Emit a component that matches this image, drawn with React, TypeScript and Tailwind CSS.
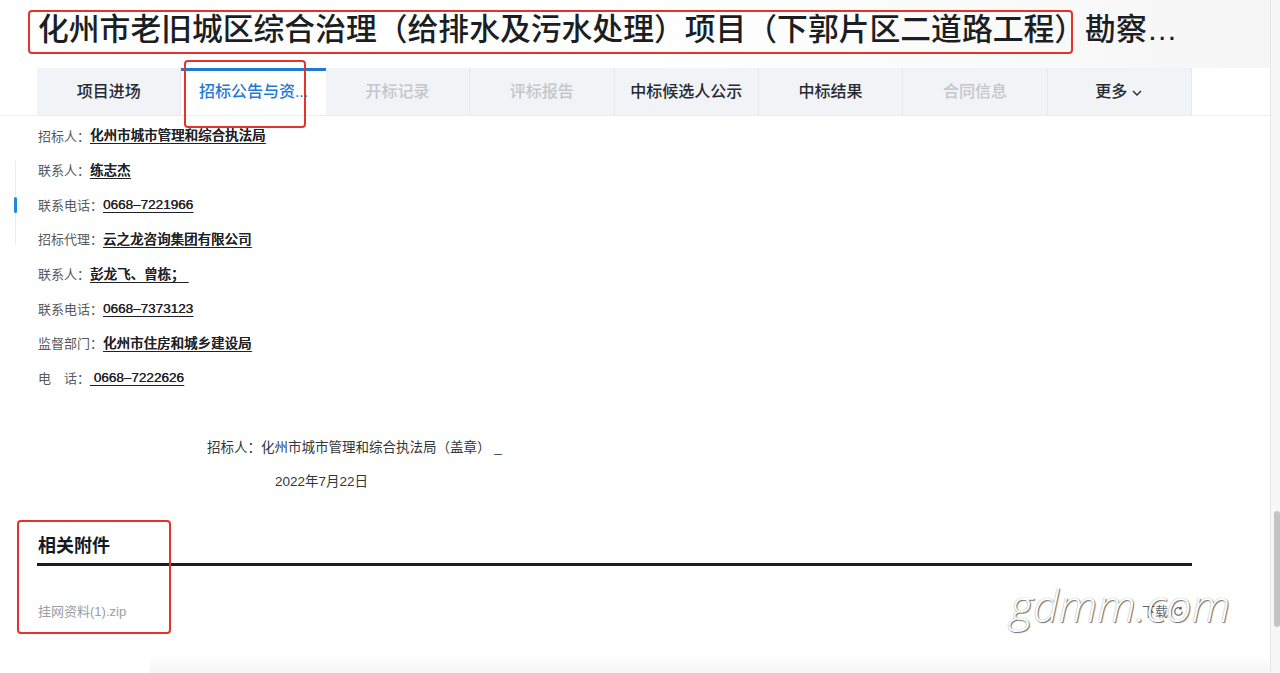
const tabs = [
  { label: "项目进场", state: "normal" },
  { label: "招标公告与资...", state: "active" },
  { label: "开标记录", state: "disabled" },
  { label: "评标报告", state: "disabled" },
  { label: "中标候选人公示", state: "normal" },
  { label: "中标结果", state: "normal" },
  { label: "合同信息", state: "disabled" },
  { label: "更多", state: "more" },
];

const rows = [
  { label: "招标人：", value: "化州市城市管理和综合执法局" },
  { label: "联系人：", value: "练志杰" },
  { label: "联系电话：", value: "0668–7221966" },
  { label: "招标代理：", value: "云之龙咨询集团有限公司" },
  { label: "联系人：", value: "彭龙飞、曾栋； " },
  { label: "联系电话：", value: "0668–7373123" },
  { label: "监督部门：", value: "化州市住房和城乡建设局" },
  { label: "电\u3000话：", value: "\u00a00668–7222626" },
];

export default function App() {
  return (
    <div className="relative flex h-[673px] w-[1280px] overflow-hidden bg-white font-['Liberation_Sans','Noto_Sans_CJK_SC',sans-serif]">
      {/* Page */}
      <div className="relative flex-1">
        <div className="h-[68px] bg-gradient-to-r from-white via-white to-[#f6f6f6] pl-[38px] pt-[11px]">
          <h1 className="max-w-[1145px] truncate text-[30.8px] font-medium leading-[38px] text-[#1b1f24]">
            化州市老旧城区综合治理（给排水及污水处理）项目（下郭片区二道路工程）勘察设计施工总承包
          </h1>
        </div>

        {/* Tabs */}
        <div className="border-b border-[#ebedf0] pl-[37px]">
          <div className="grid w-[1155px] grid-cols-8 bg-[#f1f3f6]">
            {tabs.map((t) => (
              <div
                key={t.label}
                className={
                  t.state === "active"
                    ? "flex h-[47px] items-center justify-center border-t-[3px] border-[#1f7ad6] bg-white pb-[3px] text-[16px] font-medium text-[#1f7ad6]"
                    : "flex h-[47px] items-center justify-center border-r border-[#e6e8ec] text-[16px] font-medium " +
                      (t.state === "disabled" ? "text-[#c3c6cb]" : "text-[#262a30]")
                }
              >
                {t.label}
                {t.state === "more" && (
                  <svg width="12" height="12" viewBox="0 0 12 12" className="ml-[4px] mt-[2px]">
                    <path d="M2 4l4 4 4-4" fill="none" stroke="#262a30" strokeWidth="1.4" />
                  </svg>
                )}
              </div>
            ))}
          </div>
        </div>

        {/* Details */}
        <div className="flex pt-[3px]">
          <div className="w-[38px] pl-[14px] pt-[42px]">
            <div className="flex w-[3px] flex-col items-center">
              <div className="h-[36px] w-px bg-[#ececec]" />
              <div className="h-[16px] w-[3px] rounded-full bg-[#1e88e5]" />
              <div className="h-[32px] w-px bg-[#ececec]" />
            </div>
          </div>
          <div className="flex-1 text-[13px]">
            {rows.map((r, i) => (
              <div key={i} className="flex h-[34.6px] items-center">
                <span className="text-[#555a60]">{r.label}</span>
                <span className="whitespace-pre text-[13.5px] font-medium text-[#1f2226] underline underline-offset-[3px] [text-shadow:0.3px_0_0_#1f2226]">
                  {r.value}
                </span>
              </div>
            ))}
            <div className="h-[34.6px]" />
            <div className="flex h-[34.6px] items-center pl-[169px] text-[13.5px] text-[#33363a]">
              招标人：化州市城市管理和综合执法局（盖章） _
            </div>
            <div className="flex h-[34.6px] items-center pl-[237px] text-[13.5px] text-[#33363a]">2022年7月22日</div>
          </div>
        </div>

        {/* Attachments */}
        <div className="pl-[37px] pt-[33px]">
          <div className="w-[1155px]">
            <div className="pl-px text-[18px] font-bold leading-[26px] text-[#14191f]">相关附件</div>
            <div className="mt-[4px] h-[3px] bg-[#14212b]" />
            <div className="mt-[36px] flex items-center justify-between pl-px text-[13px]">
              <span className="text-[#9a9da1]">挂网资料(1).zip</span>
              <span className="flex items-center gap-[4px] pr-[7px] text-[13px] text-[#666]">
                下载
                <svg width="13" height="13" viewBox="0 0 12 12">
                  <path d="M9.5 6a3.5 3.5 0 1 1-1-2.5M8.5 1.5v2h-2" fill="none" stroke="#666" strokeWidth="1.1" />
                </svg>
              </span>
            </div>
          </div>
        </div>

        <div className="absolute bottom-0 left-[150px] right-0 h-[18px] bg-gradient-to-b from-white to-[#f5f5f5]" />

        {/* Annotation boxes */}
        <div className="absolute left-[28px] top-[10px] h-[44px] w-[1045px] rounded-[4px] border-2 border-[#e2332d]" />
        <div className="absolute left-[184px] top-[60px] h-[68px] w-[122px] rounded-[4px] border-2 border-[#e2332d]" />
        <div className="absolute left-[17px] top-[520px] h-[114px] w-[154px] rounded-[4px] border-2 border-[#e2332d]" />

        {/* Watermark */}
        <div className="absolute left-[1010px] top-[577px] font-['Open_Sans',sans-serif] text-[45px] font-light italic leading-[56px] text-white [text-shadow:1px_1px_1px_rgba(0,0,0,0.55),0_0_1px_rgba(0,0,0,0.45)]">
          gdmm.com
        </div>
      </div>

      {/* Scrollbar */}
      <div className="w-[10px] border-l border-[#e6e6e6] bg-[#f7f7f7] pl-[3px] pt-[511px]">
        <div className="h-[116px] w-[6px] rounded-[3px] bg-[#c4c4c4]" />
      </div>
    </div>
  );
}
